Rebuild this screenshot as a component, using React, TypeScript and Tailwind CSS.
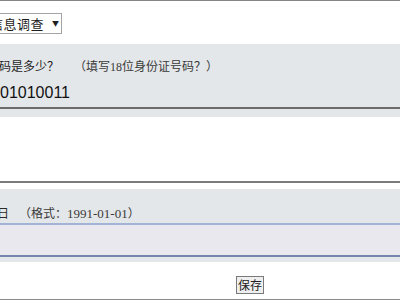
export default function App() {
  const cjk = { fontFamily: '"Noto Sans CJK SC", "Noto Sans", sans-serif' };
  return (
    <div className="w-[400px] h-[300px] overflow-hidden bg-white flex flex-col" style={cjk}>
      <div className="h-px bg-[#868686]" />
      <div className="h-[43px] pt-[12px]">
        <div className="ml-[-41px] w-[103px] h-[21px] border border-[#a3a3a3] bg-white flex items-center pl-[3px] text-[13px] leading-[13px] tracking-[0.5px] text-[#1e1e1e]">
          <span>个人信息调查</span>
          <span className="ml-[8px] text-[7px]">▼</span>
        </div>
      </div>
      <div className="h-[73px] bg-[#e4e7e9] pt-[16px] flex flex-col">
        <div className="h-[12px] flex items-center text-[12px] leading-[12px] whitespace-nowrap">
          <span className="ml-[-1px] text-[#1f1f1f]">码是多少？</span>
          <span className="ml-[15px] text-[#3a3a3a]">（填写<span style={{ fontFamily: '"Liberation Serif", serif' }}>18</span>位身份证号码？）</span>
        </div>
        <div className="mt-[8px] h-[29px] border-b-2 border-[#6b6b6b] pt-[4px]">
          <div className="text-[16px] leading-[18px] text-[#111]" style={{ fontFamily: '"Liberation Sans", Arial, sans-serif' }}>
            01010011
          </div>
        </div>
      </div>
      <div className="h-[64px] bg-white" />
      <div className="h-[2px] bg-[#7a7a7a]" />
      <div className="h-[6px] bg-white" />
      <div className="h-[73px] bg-[#e4e7e9] pt-[18px] flex flex-col">
        <div className="h-[12px] flex items-center text-[12px] leading-[12px] whitespace-nowrap text-[#2a2a2a]">
          <span className="ml-[-3px]">日</span>
          <span className="ml-[10px] text-[#3a3a3a]">
            （格式：<span className="text-[13px]" style={{ fontFamily: '"Liberation Serif", serif' }}>1991-01-01</span>）
          </span>
        </div>
        <div className="mt-[4px] h-[34px] border-t-2 border-b-2 border-t-[#a3b3d6] border-b-[#7485ad] bg-[#e8e8ee]" />
      </div>
      <div className="h-[14px]" />
      <div className="ml-[236px] w-[28px] h-[18px] border border-[#7a7a7a] bg-[#efefef] flex items-center justify-center text-[12px] leading-[12px] text-[#222]">
        保存
      </div>
      <div className="flex-1" />
      <div className="h-px bg-[#8a8a8a]" />
    </div>
  );
}
